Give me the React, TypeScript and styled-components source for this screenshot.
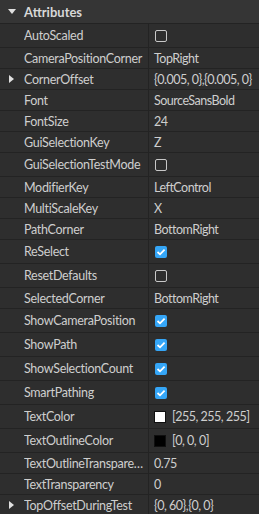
import React from "react";
import styled, { createGlobalStyle } from "styled-components";

const Global = createGlobalStyle`
  html, body { margin: 0; padding: 0; background: #2e2e2e; }
  body { font-family: "Lato", "Noto Sans", sans-serif; }
`;

const Panel = styled.div`
  width: 259px;
  background: #2e2e2e;
  color: #cecece;
  font-size: 12.5px;
  letter-spacing: -0.25px;
  overflow: hidden;
`;

const Header = styled.div`
  height: 23px;
  display: flex;
  align-items: center;
  background: #353535;
  border-bottom: 1px solid #232323;
  font-weight: 700;
  font-size: 13px;
  letter-spacing: 0;
  color: #d8d8d8;
`;

const ArrowCell = styled.div`
  width: 24px;
  height: 100%;
  display: flex;
  align-items: center;
  justify-content: center;
  flex: none;
`;

const Row = styled.div<{ $tall?: boolean }>`
  height: ${(p) => (p.$tall ? 23 : 20)}px;
  display: flex;
  border-bottom: 1px solid #232323;
`;

const NameCell = styled.div`
  width: 148px;
  flex: none;
  display: flex;
  align-items: center;
  border-right: 1px solid #232323;
  min-width: 0;
`;

const NameText = styled.span`
  white-space: nowrap;
  overflow: hidden;
  text-overflow: ellipsis;
  min-width: 0;
  padding-right: 3px;
  letter-spacing: -0.3px;
`;

const ValueCell = styled.div`
  flex: 1;
  display: flex;
  align-items: center;
  padding-left: 5px;
  gap: 6px;
  white-space: nowrap;
  overflow: hidden;
  min-width: 0;
  font-size: 12.5px;
  letter-spacing: -0.5px;
`;

const Box = styled.div<{ $checked?: boolean }>`
  width: 12px;
  height: 12px;
  box-sizing: border-box;
  border-radius: 2px;
  margin-left: 1px;
  display: flex;
  align-items: center;
  justify-content: center;
  border: ${(p) => (p.$checked ? "none" : "1px solid #c8c8c8")};
  background: ${(p) => (p.$checked ? "#35a6f7" : "transparent")};
`;

const Swatch = styled.div<{ $color: string }>`
  width: 12px;
  height: 12px;
  flex: none;
  box-sizing: border-box;
  border: 1px solid #101010;
  background: ${(p) => p.$color};
`;

const TriDown = () => (
  <svg width="8" height="6" viewBox="0 0 8 6">
    <polygon points="0,0 8,0 4,5" fill="#e0e0e0" />
  </svg>
);

const TriRight = () => (
  <svg width="6" height="8" viewBox="0 0 6 8">
    <polygon points="0,0 5,4 0,8" fill="#e0e0e0" />
  </svg>
);

const Check = () => (
  <svg width="10" height="8" viewBox="0 0 10 8">
    <polyline points="1.5,4 4,6.3 8.6,1.6" fill="none" stroke="#fff" strokeWidth="1.8" />
  </svg>
);

type Prop =
  | { name: string; kind: "text"; value: string; expand?: boolean }
  | { name: string; kind: "bool"; value: boolean }
  | { name: string; kind: "color"; value: string; color: string };

const props: Prop[] = [
  { name: "AutoScaled", kind: "bool", value: false },
  { name: "CameraPositionCorner", kind: "text", value: "TopRight" },
  { name: "CornerOffset", kind: "text", value: "{0.005, 0},{0.005, 0}", expand: true },
  { name: "Font", kind: "text", value: "SourceSansBold" },
  { name: "FontSize", kind: "text", value: "24" },
  { name: "GuiSelectionKey", kind: "text", value: "Z" },
  { name: "GuiSelectionTestMode", kind: "bool", value: false },
  { name: "ModifierKey", kind: "text", value: "LeftControl" },
  { name: "MultiScaleKey", kind: "text", value: "X" },
  { name: "PathCorner", kind: "text", value: "BottomRight" },
  { name: "ReSelect", kind: "bool", value: true },
  { name: "ResetDefaults", kind: "bool", value: false },
  { name: "SelectedCorner", kind: "text", value: "BottomRight" },
  { name: "ShowCameraPosition", kind: "bool", value: true },
  { name: "ShowPath", kind: "bool", value: true },
  { name: "ShowSelectionCount", kind: "bool", value: true },
  { name: "SmartPathing", kind: "bool", value: true },
  { name: "TextColor", kind: "color", value: "[255, 255, 255]", color: "#ffffff" },
  { name: "TextOutlineColor", kind: "color", value: "[0, 0, 0]", color: "#000000" },
  { name: "TextOutlineTransparency", kind: "text", value: "0.75" },
  { name: "TextTransparency", kind: "text", value: "0" },
  { name: "TopOffsetDuringTest", kind: "text", value: "{0, 60},{0, 0}", expand: true },
];

export default function App() {
  return (
    <Panel>
      <Global />
      <Header>
        <ArrowCell>
          <TriDown />
        </ArrowCell>
        Attributes
      </Header>
      {props.map((p) => (
        <Row key={p.name} $tall={p.kind !== "text"}>
          <NameCell>
            <ArrowCell>{p.kind === "text" && p.expand ? <TriRight /> : null}</ArrowCell>
            <NameText>{p.name}</NameText>
          </NameCell>
          <ValueCell>
            {p.kind === "text" && p.value}
            {p.kind === "bool" && <Box $checked={p.value}>{p.value && <Check />}</Box>}
            {p.kind === "color" && (
              <>
                <Swatch $color={p.color} />
                {p.value}
              </>
            )}
          </ValueCell>
        </Row>
      ))}
    </Panel>
  );
}
